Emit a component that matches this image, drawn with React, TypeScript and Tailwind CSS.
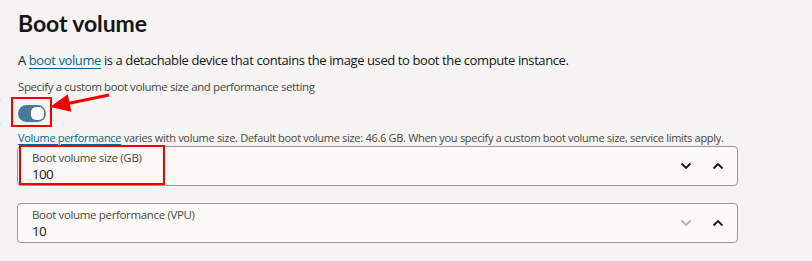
import React from "react";

const Chevron = ({ up, dim }: { up?: boolean; dim?: boolean }) => (
  <svg width="12" height="8" viewBox="0 0 12 8" className={dim ? "text-[#b5b1ac]" : "text-[#161513]"}>
    <path
      d={up ? "M1.5 6.5 L6 2 L10.5 6.5" : "M1.5 1.5 L6 6 L10.5 1.5"}
      fill="none"
      stroke="currentColor"
      strokeWidth="1.8"
    />
  </svg>
);

interface FieldProps {
  label: string;
  value: string;
  highlight?: boolean;
  downDisabled?: boolean;
}

const NumberField = ({ label, value, highlight, downDisabled }: FieldProps) => (
  <div className="relative -ml-[1px] flex h-[40px] w-[721px] items-center rounded-[4px] border border-[#9b9792] bg-[#fbfaf9]">
    {highlight && (
      <div className="absolute left-[1px] top-[-2px] h-[40px] w-[146px] border-2 border-[#f20000]" />
    )}
    <div className="flex flex-1 flex-col self-start pl-[14px] pt-[3px]">
      <span className="text-[11.5px] leading-[16px] tracking-[-0.35px] text-[#4a4640]">{label}</span>
      <span className="text-[13.5px] leading-[16px] tracking-[-0.7px] text-[#161513]">{value}</span>
    </div>
    <div className="flex items-center gap-[20px] pr-[13px]">
      <Chevron dim={downDisabled} />
      <Chevron up />
    </div>
  </div>
);

export default function App() {
  return (
    <div
      className="h-[261px] w-[812px] bg-[#f5f4f2] pl-[18px] pt-[6px] text-[#161513]"
      style={{ fontFamily: '"Open Sans", "Liberation Sans", sans-serif' }}
    >
      <h1
        className="text-[23px] font-bold leading-[32px] tracking-[-0.1px] pt-[1px]"
        style={{ fontFamily: 'Lato, "Open Sans", sans-serif' }}
      >
        Boot volume
      </h1>
      <p className="mt-[11px] text-[13px] leading-[20px] tracking-[-0.4px]">
        A{" "}
        <span className="text-[#00688c] underline decoration-[#00688c] underline-offset-[3px]">boot volume</span>{" "}
        is a detachable device that contains the image used to boot the compute instance.
      </p>
      <p className="mt-[9px] text-[11.5px] leading-[16px] tracking-[-0.4px] text-[#4a4640]">
        Specify a custom boot volume size and performance setting
      </p>
      <div className="relative h-[34px]">
        <div className="absolute left-[-7px] top-[2px] h-[30px] w-[41px] border-2 border-[#f20000]" />
        <div className="absolute left-0 top-[10px] flex h-[17px] w-[28px] items-center justify-end rounded-full bg-[#467a96] pr-[2px]">
          <div className="h-[13px] w-[13px] rounded-[5px] bg-[#fbfaf9]" />
        </div>
        <svg className="absolute left-[30px] top-[-2px]" width="64" height="24" viewBox="0 0 64 24">
          <line x1="61" y1="2" x2="20" y2="10.5" stroke="#f20000" strokeWidth="3" />
          <polygon points="2,14 19.8,1.2 23.4,18.8" fill="#f20000" />
        </svg>
      </div>
      <p className="pt-[1px] text-[11px] leading-[16px] tracking-[-0.3px] text-[#4a4640]">
        <span className="text-[#00688c] underline decoration-[#00688c] underline-offset-[2px]">Volume performance</span>{" "}
        varies with volume size. Default boot volume size: 46.6 GB. When you specify a custom boot volume size, service limits apply.
      </p>
      <div className="flex flex-col gap-[17px]">
        <NumberField label="Boot volume size (GB)" value="100" highlight />
        <NumberField label="Boot volume performance (VPU)" value="10" downDisabled />
      </div>
    </div>
  );
}
